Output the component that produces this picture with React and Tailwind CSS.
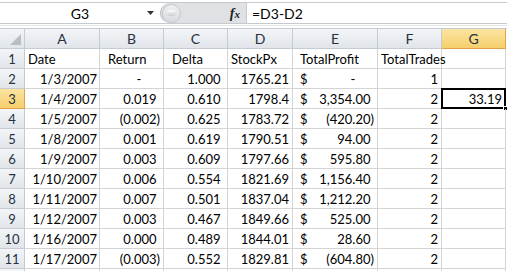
import React from 'react'

const font = { fontFamily: 'Lato, "Liberation Sans", sans-serif' }

const Gap = ({ children }) => <span className="invisible">{children}</span>

const rows = [
  ['1/3/2007', '-', '1.000', '1765.21', '-', '1', ''],
  ['1/4/2007', '0.019', '0.610', '1798.4', '3,354.00', '2', '33.19'],
  ['1/5/2007', '(0.002)', '0.625', '1783.72', '(420.20)', '2', ''],
  ['1/8/2007', '0.001', '0.619', '1790.51', '94.00', '2', ''],
  ['1/9/2007', '0.003', '0.609', '1797.66', '595.80', '2', ''],
  ['1/10/2007', '0.006', '0.554', '1821.69', '1,156.40', '2', ''],
  ['1/11/2007', '0.007', '0.501', '1837.04', '1,212.20', '2', ''],
  ['1/12/2007', '0.003', '0.467', '1849.66', '525.00', '2', ''],
  ['1/16/2007', '0.000', '0.489', '1844.01', '28.60', '2', ''],
  ['1/17/2007', '(0.003)', '0.552', '1829.81', '(604.80)', '2', ''],
]

// accounting style: positives leave room for ")", dash leaves room for "00)"
function acct(v) {
  if (v === '-') return <>-<Gap>00)</Gap></>
  if (v.startsWith('(')) return v
  return <>{v}<Gap>)</Gap></>
}

const cell = 'h-[20px] border-r border-b border-[#d4d4d4] leading-[21px] whitespace-nowrap'
const head = 'h-[20px] border-r border-b border-[#c5cbd3] bg-gradient-to-b from-[#f3f5f8] to-[#e1e5ea] text-[#27313d] text-center leading-[20px]'
const headSel = 'h-[20px] border-r border-b border-[#e2a24a] bg-gradient-to-b from-[#fbe4a0] to-[#f6cf6c] text-[#27313d] text-center leading-[20px]'

function FormulaBar() {
  return (
    <div className="h-[28px] bg-white pt-[2px]">
      <div className="flex h-[22px] border-t border-b border-[#c6c9cd]">
        <div className="relative w-[160px] text-center text-[14px] leading-[21px] text-black">
          G3
          <svg className="absolute right-[5px] top-[8px]" width="8" height="5" viewBox="0 0 8 5">
            <path d="M0 0h7L3.5 4z" fill="#333" />
          </svg>
        </div>
        <div className="flex w-[86px] items-center justify-between rounded-l-full border-l border-[#b4b9bf] bg-[#dfe1e4] pr-[6px]">
          <div className="ml-[1px] flex h-[19px] w-[19px] items-center justify-center rounded-full border border-[#c3c7cc] bg-gradient-to-b from-[#eef0f2] to-[#d8dbdf]">
            <div className="h-[6px] w-[9px] rounded-full bg-gradient-to-b from-white to-[#c9cdd2]" />
          </div>
          <span className="font-['Liberation_Serif'] text-[14px] font-bold italic text-[#222]">f<span className="text-[11px]">x</span></span>
        </div>
        <div className="flex-1 border-l border-[#c6c9cd] pl-[5px] text-[14px] leading-[21px] text-black">=D3-D2</div>
      </div>
      <div className="h-[1px] mt-[1px] bg-[#e3e5e8]" />
    </div>
  )
}

export default function App() {
  return (
    <div className="h-[271px] w-[507px] overflow-hidden bg-white text-[13px] text-black" style={font}>
      <FormulaBar />
      <div className="grid grid-cols-[25px_75px_64px_64px_65px_85px_64px_64px] border-t border-[#c5cbd3]">
        <div className="relative h-[20px] border-r border-b border-[#c5cbd3] bg-gradient-to-b from-[#f3f5f8] to-[#e1e5ea]">
          <svg className="absolute right-[3px] bottom-[3px]" width="11" height="11" viewBox="0 0 11 11">
            <path d="M11 0V11H0z" fill="#b9bec5" />
          </svg>
        </div>
        {['A', 'B', 'C', 'D', 'E', 'F'].map((c) => (
          <div key={c} className={`${head} text-[14px]`}>{c}</div>
        ))}
        <div className={`${headSel} text-[14px]`}>G</div>

        <div className={head}>1</div>
        <div className={`${cell} pl-[3px]`}>Date</div>
        <div className={`${cell} pl-[8px]`}>Return</div>
        <div className={`${cell} pl-[8px]`}>Delta</div>
        <div className={`${cell} pl-[3px]`}>StockPx</div>
        <div className={`${cell} pl-[7px]`}>TotalProfit</div>
        <div className={`${cell} pl-[3px]`}>TotalTrades</div>
        <div className={cell} />

        {rows.map((r, i) => {
          const n = i + 2
          return (
            <React.Fragment key={n}>
              <div className={n === 3 ? headSel : head}>{n}</div>
              <div className={`${cell} pr-[2px] text-right`}>{r[0]}</div>
              <div className={`${cell} pr-[3px] text-right`}>{acct(r[1])}</div>
              <div className={`${cell} pr-[3px] text-right`}>{acct(r[2])}</div>
              <div className={`${cell} pr-[3px] text-right`}>{r[3]}</div>
              <div className={`${cell} flex justify-between pl-[7px] pr-[3px]`}>
                <span>$</span>
                <span>{acct(r[4])}</span>
              </div>
              <div className={`${cell} pr-[3px] text-right`}>{r[5]}</div>
              <div className={`${cell} relative pr-[3px] text-right`}>
                {r[6]}
                {n === 3 && (
                  <>
                    <div className="absolute -left-[1px] -top-[1px] -bottom-[1px] -right-[1px] border-2 border-black" />
                    <div className="absolute -bottom-[3px] -right-[3px] h-[5px] w-[5px] border border-white bg-black" />
                  </>
                )}
              </div>
            </React.Fragment>
          )
        })}

        <div className={head} />
        {[0, 1, 2, 3, 4, 5, 6].map((k) => (
          <div key={k} className={cell} />
        ))}
      </div>
    </div>
  )
}
